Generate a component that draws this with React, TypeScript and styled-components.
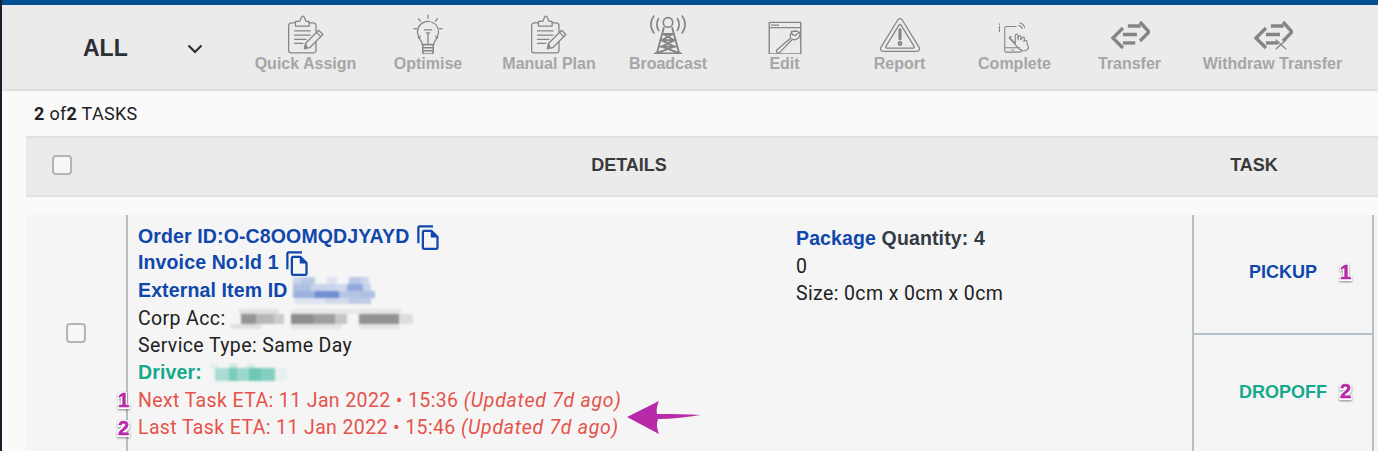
import { FC, ReactNode } from "react";
import styled, { createGlobalStyle } from "styled-components";

const GlobalStyle = createGlobalStyle`
  html, body { margin: 0; padding: 0; background: #fafafa; }
  body { font-family: Roboto, "Liberation Sans", sans-serif; color: #212121; }
`;

const boldFont = `"Liberation Sans", Arial, sans-serif`;

const Page = styled.div`
  height: 451px;
  overflow: hidden;
  display: flex;
  flex-direction: column;
  border-left: 2px solid #16202c;
  background: #fafafa;
`;
const TopBar = styled.div`
  flex: none;
  height: 5px;
  background: #044e92;
  box-shadow: 0 1px 2px rgba(0, 0, 0, 0.25);
`;
const Toolbar = styled.div`
  flex: none;
  height: 84px;
  display: flex;
  background: #ebebeb;
  border-bottom: 2px solid #e0e0e0;
`;
const Selector = styled.div`
  width: 242px;
  display: flex;
  align-items: center;
  padding: 3px 0 0 81px;
  box-sizing: border-box;
  font-family: ${boldFont};
  font-size: 23px;
  font-weight: 700;
  color: #2b3036;
`;
const Chevron = styled.svg`
  margin-left: 59px;
`;
const Actions = styled.div`
  display: grid;
  grid-template-columns: 123px 122px 120px 118px 115px 115px 115px 115px 171px;
`;
const Action = styled.div`
  display: flex;
  flex-direction: column;
  align-items: center;
  padding-top: 9px;
  font-family: ${boldFont};
  font-size: 16px;
  line-height: 19px;
  font-weight: 700;
  color: #a6a6a6;
  white-space: nowrap;
`;
const ActionIcon = styled.svg`
  display: block;
  height: 40px;
  width: 40px;
  fill: none;
  stroke: #858585;
  stroke-width: 1.2;
  stroke-linejoin: round;
  stroke-linecap: round;
`;
const Count = styled.div`
  flex: none;
  height: 45px;
  padding: 13px 0 0 32px;
  box-sizing: border-box;
  font-size: 18px;
  line-height: 19px;
  letter-spacing: 0.3px;
  b { font-weight: 700; }
`;
const Content = styled.div`
  padding-left: 24px;
  display: flex;
  flex-direction: column;
`;
const HeaderRow = styled.div`
  height: 57px;
  display: grid;
  grid-template-columns: 72px 1062px 188px 1fr;
  align-items: center;
  background: #ebebeb;
  border-top: 2px solid #e0e0e0;
  border-bottom: 2px solid #e0e0e0;
  margin-bottom: 18px;
`;
const HeaderCell = styled.div`
  text-align: center;
  font-family: ${boldFont};
  font-size: 18px;
  font-weight: 700;
  color: #3a3a3a;
  margin-bottom: 3px;
`;
const Checkbox = styled.span`
  display: block;
  width: 20px;
  height: 20px;
  box-sizing: border-box;
  border: 2px solid #b4b4b4;
  border-radius: 4px;
  background: #f7f7f7;
`;
const HeaderCheck = styled.div`
  padding: 0 0 3px 26px;
`;
const TaskRow = styled.div`
  height: 260px;
  display: grid;
  grid-template-columns: 100px 1066px 182px 1fr;
  background: #f5f5f5;
  border-radius: 4px 0 0 0;
`;
const CheckCell = styled.div`
  display: flex;
  justify-content: center;
  padding-top: 108px;
`;
const DetailsCell = styled.div`
  display: grid;
  grid-template-columns: 658px 1fr;
  padding: 8px 0 0 10px;
  border-left: 2px solid #b4c0c6;
`;
const Stack = styled.div<{ $top?: number }>`
  padding-top: ${(p) => p.$top ?? 0}px;
`;
const Line = styled.div<{ $tone?: "blue" | "green" | "red"; $bold?: boolean; $h?: number }>`
  position: relative;
  display: flex;
  align-items: center;
  height: ${(p) => p.$h ?? 27.5}px;
  font-family: ${(p) => (p.$bold ? boldFont : "Roboto, sans-serif")};
  font-size: 19.5px;
  letter-spacing: ${(p) => (p.$bold ? 0.13 : 0.38)}px;
  font-weight: ${(p) => (p.$bold ? 700 : 400)};
  white-space: pre;
  color: ${(p) =>
    p.$tone === "blue" ? "#0f47ad" : p.$tone === "green" ? "#16a98c" : p.$tone === "red" ? "#e5534b" : "#212121"};
`;
const Muted = styled.em`
  font-style: italic;
  letter-spacing: 0.72px;
`;
const Dark = styled.span`
  color: #333b44;
`;
const Blue = styled.span`
  color: #0f47ad;
`;
const CopyIcon = styled.svg`
  flex: none;
  width: 27px;
  height: 27px;
  margin-top: 2px;
  fill: #0f47ad;
`;
const Mosaic = styled.svg`
  flex: none;
  filter: blur(1px);
`;
const TaskColumn = styled.div`
  display: grid;
  grid-template-rows: 118px 1fr;
  border-left: 2px solid #b4c0c6;
  border-right: 2px solid #b4c0c6;
`;
const TaskCell = styled.div<{ $tone: "blue" | "green"; $divider?: boolean }>`
  position: relative;
  display: flex;
  justify-content: center;
  align-items: flex-start;
  padding-top: 47px;
  box-sizing: border-box;
  font-family: ${boldFont};
  font-size: 18px;
  line-height: 21px;
  font-weight: 700;
  color: ${(p) => (p.$tone === "blue" ? "#0f47ad" : "#16a98c")};
  border-top: ${(p) => (p.$divider ? "2px solid #b4c0c6" : "none")};
`;
const Marker = styled.span<{ $left: number; $top: number }>`
  position: absolute;
  left: ${(p) => p.$left}px;
  top: ${(p) => p.$top}px;
  font-family: ${boldFont};
  font-size: 20px;
  line-height: 20px;
  font-weight: 700;
  letter-spacing: 0;
  color: #b72ba9;
  -webkit-text-stroke: 0.5px #b72ba9;
  text-shadow: -1.5px -1.5px 0 #fff, 1.5px -1.5px 0 #fff, -1.5px 1.5px 0 #fff, 1.5px 1.5px 0 #fff;
  filter: drop-shadow(0.5px 1px 1px rgba(0, 0, 0, 0.45));
`;
const Arrow = styled.svg`
  position: absolute;
  left: 623px;
  top: 308px;
`;
const Shell = styled.div`
  position: relative;
`;

const swapArrows = (
  <g strokeWidth="3.200" strokeLinecap="butt" strokeLinejoin="miter">
    <path d="M28.500 7.600L37 17l-8.500 8.600" />
    <path d="M17 11.400h12M12.300 19.500h13.300" />
    <path d="M12.300 13.300L2.800 22.800l9.500 9.500" />
    <path d="M12.300 27.500H24" />
  </g>
);

const icons: Record<string, ReactNode> = {
  clipboard: (
    <>
      <path d="M9 8.500H5A2.500 2.500 0 0 0 2.500 11v23.500A2.500 2.500 0 0 0 5 37h21a2.500 2.500 0 0 0 2.500-2.500V27M28.500 17v-6A2.500 2.500 0 0 0 26 8.500h-4" />
      <path d="M9 11.500V7h4l2-4.500a1.500 1.500 0 0 1 2 0L19 7h3v4.500Z" />
      <path d="M8 16h15M8 20h15M8 24h11M8 28h8" />
      <path d="M17.500 33l1-5L31 15.500l4 4L22.500 32Z" />
      <path d="M29 17.500l4 4M17.500 33l2.500-1.500-1-2.500Z" />
    </>
  ),
  bulb: (
    <>
      <path d="M19 1v3M10 4.500l1.800 2.200M28 4.500l-1.800 2.200M5.500 14h2.500M30 14h2.500M10 23l1.800-2M28 23l-1.800-2" />
      <path d="M13.500 29c0-4-4.500-6-4.500-12a10 10 0 0 1 20 0c0 6-4.500 8-4.500 12Z" strokeDasharray="30 2" />
      <path d="M15.500 15h7M17.500 18h3M19 18v10" />
      <path d="M14 29h10v7a2 2 0 0 1-2 2h-6a2 2 0 0 1-2-2ZM14 32h10M14 35h10" strokeWidth="1.4" />
    </>
  ),
  tower: (
    <>
      <g strokeWidth="1.600">
        <path d="M5.500 2c-3.500 5-3.500 11 0 16M32.500 2c3.500 5 3.500 11 0 16M10 4.500c-2 3.500-2 7.500 0 11M28 4.500c2 3.500 2 7.500 0 11" />
        <circle cx="19" cy="8" r="4.500" />
      </g>
      <path d="M15 13L8.500 37M23 13l6.500 24M6.500 37.500h25M14.500 19h9M13 25h12M11 31h16M14.500 19L25 25 13 31l16 6M23.500 19L13 25l12 6L9 37" strokeWidth="1.800" />
    </>
  ),
  edit: (
    <>
      <path d="M4 8h30v30H4ZM4 13h30" strokeWidth="1.300" />
      <path d="M6 10.500h7" />
      <path d="M31 16.500c-3-1.500-7 .5-7 4 0 1 .3 1.800.5 2.300L11.500 34c-2 2 1 4 3 2l11.500-12c2 .8 4 .5 5.500-1s2.200-4 1-6l-3.500 3.500-3-1-1-3Z" />
    </>
  ),
  report: (
    <>
      <path d="M17 5.500a2.500 2.500 0 0 1 4 0l16 26a2.500 2.500 0 0 1-2 4H3a2.500 2.500 0 0 1-2-4Z" />
      <path d="M18 10.500a1.200 1.200 0 0 1 2 0l12.500 20.500a1 1 0 0 1-1 1.500h-25a1 1 0 0 1-1-1.500Z" />
      <path d="M19 15v8.500" strokeWidth="3" />
      <circle cx="19" cy="28" r="1.400" strokeWidth="1.800" />
    </>
  ),
  complete: (
    <g transform="translate(2.500 6) scale(0.84)">
      <path d="M21 7H10a2 2 0 0 0-2 2v25a2 2 0 0 0 2 2h15a2 2 0 0 0 2-2v-1" />
      <path d="M8 31h17M16 33.500h2" />
      <path d="M2 4v1M2 7v6" />
      <path d="M25 3c3 .5 5 2.500 5.500 5.500M24 6c2 .3 3.300 1.600 3.600 3.500" />
      <path d="M13 19l7 7v-9a1.500 1.500 0 0 1 3 0v5l1-4a1.400 1.400 0 0 1 2.500.5L26 22l2-2.500a1.300 1.300 0 0 1 2.300 1L29.500 24l1.500-1a1.200 1.200 0 0 1 2 1c.5 3 1 5 2 7-1.500 3-5 4-8 3-3-1-5-4-6.500-6l-7-7.500a1.500 1.500 0 0 1 2-2Z" />
    </g>
  ),
  transfer: swapArrows,
  withdraw: (
    <>
      {swapArrows}
      <path d="M21.800 24.700l9.500 8.500M31.300 24.700l-9.500 8.500" />
    </>
  ),
};

const actions = [
  ["Quick Assign", "clipboard"],
  ["Optimise", "bulb"],
  ["Manual Plan", "clipboard"],
  ["Broadcast", "tower"],
  ["Edit", "edit"],
  ["Report", "report"],
  ["Complete", "complete"],
  ["Transfer", "transfer"],
  ["Withdraw Transfer", "withdraw"],
];

const ToolAction: FC<{ label: string; icon: string }> = ({ label, icon }) => (
  <Action>
    <ActionIcon viewBox="0 0 38 38">{icons[icon]}</ActionIcon>
    {label}
  </Action>
);

const Copy: FC = () => (
  <CopyIcon viewBox="0 0 24 24">
    <path d="M16 1H4c-1.100 0-2 .9-2 2v14h2V3h12V1zm-1 4H8c-1.100 0-1.990.9-1.990 2L6 21c0 1.100.89 2 1.990 2H19c1.100 0 2-.9 2-2V11l-6-6zM8 21V7h6v5h5v9H8z" />
  </CopyIcon>
);

// pixelated redaction blocks: x, y, w, h, opacity
const Redaction: FC<{ w: number; h: number; color: string; cells: number[][] }> = ({ w, h, color, cells }) => (
  <Mosaic width={w} height={h} viewBox={`0 0 ${w} ${h}`}>
    {cells.map(([x, y, cw, ch, o], i) => (
      <rect key={i} x={x} y={y} width={cw} height={ch} fill={color} opacity={o} />
    ))}
  </Mosaic>
);

const itemCells = [
  [0, 0, 8, 7, 0.22], [8, 0, 14, 7, 0.3], [34, 0, 10, 7, 0.12], [56, 0, 12, 7, 0.3], [68, 0, 8, 7, 0.2],
  [0, 7, 18, 7, 0.35], [18, 7, 24, 7, 0.22], [42, 7, 12, 7, 0.18], [54, 7, 16, 7, 0.5], [70, 7, 8, 7, 0.22],
  [0, 14, 22, 7, 0.45], [22, 14, 24, 7, 0.68], [46, 14, 20, 7, 0.32], [66, 14, 16, 7, 0.35],
  [2, 21, 30, 6, 0.12], [32, 21, 24, 6, 0.18], [56, 21, 22, 6, 0.28],
];
const corpCells = [
  [8, 0, 40, 5, 0.12], [60, 0, 70, 5, 0.08], [130, 0, 40, 5, 0.1],
  [10, 5, 15, 10, 0.6], [25, 5, 18, 10, 0.38], [43, 5, 10, 10, 0.25], [60, 5, 22, 10, 0.65], [82, 5, 22, 10, 0.55],
  [104, 5, 12, 10, 0.3], [128, 5, 40, 10, 0.62], [168, 5, 14, 10, 0.15],
  [0, 15, 30, 5, 0.12], [60, 15, 50, 5, 0.1], [128, 15, 40, 5, 0.1],
];
const driverCells = [
  [3, 0, 8, 4, 0.1], [22, 0, 8, 4, 0.2], [40, 0, 8, 4, 0.14],
  [8, 4, 14, 13, 0.32], [22, 4, 8, 13, 0.55], [30, 4, 12, 13, 0.4], [42, 4, 12, 13, 0.6], [54, 4, 14, 13, 0.5],
  [68, 4, 12, 13, 0.06],
];

export default function App() {
  return (
    <Page>
      <GlobalStyle />
      <TopBar />
      <Toolbar>
        <Selector>
          ALL
          <Chevron width="16" height="10" viewBox="0 0 16 10" fill="none" stroke="#2b3036" strokeWidth="2.200">
            <path d="M1.500 1.500L8 8l6.500-6.500" />
          </Chevron>
        </Selector>
        <Actions>
          {actions.map(([label, icon]) => (
            <ToolAction key={label} label={label} icon={icon} />
          ))}
        </Actions>
      </Toolbar>
      <Shell>
        <Count>
          <b>2</b> of<b>2</b> TASKS
        </Count>
        <Content>
          <HeaderRow>
            <HeaderCheck>
              <Checkbox />
            </HeaderCheck>
            <HeaderCell>DETAILS</HeaderCell>
            <HeaderCell>TASK</HeaderCell>
          </HeaderRow>
          <TaskRow>
            <CheckCell>
              <Checkbox />
            </CheckCell>
            <DetailsCell>
              <Stack>
                <Line $tone="blue" $bold $h={26}>
                  Order ID:O-C8OOMQDJYAYD <Copy />
                </Line>
                <Line $tone="blue" $bold $h={26}>
                  Invoice No:Id 1 <Copy />
                </Line>
                <Line $tone="blue" $bold $h={30}>
                  External Item ID <Redaction w={84} h={27} color="#2f5fc4" cells={itemCells} />
                </Line>
                <Line $h={27}>
                  Corp Acc: <Redaction w={182} h={20} color="#555" cells={corpCells} />
                </Line>
                <Line $h={27}>Service Type: Same Day</Line>
                <Line $tone="green" $bold>
                  Driver: <Redaction w={80} h={18} color="#16a98c" cells={driverCells} />
                </Line>
                <Line $tone="red">
                  <Marker $left={-20} $top={3}>1</Marker>
                  Next Task ETA: 11 Jan 2022 • 15:36 <Muted>(Updated 7d ago)</Muted>
                </Line>
                <Line $tone="red">
                  <Marker $left={-20} $top={4}>2</Marker>
                  Last Task ETA: 11 Jan 2022 • 15:46 <Muted>(Updated 7d ago)</Muted>
                </Line>
              </Stack>
              <Stack $top={2}>
                <Line $bold>
                  <Dark>
                    <Blue>Package</Blue> Quantity: 4
                  </Dark>
                </Line>
                <Line>0</Line>
                <Line>Size: 0cm x 0cm x 0cm</Line>
              </Stack>
            </DetailsCell>
            <TaskColumn>
              <TaskCell $tone="blue">
                PICKUP
                <Marker $left={146} $top={47}>1</Marker>
              </TaskCell>
              <TaskCell $tone="green" $divider>
                DROPOFF
                <Marker $left={146} $top={46}>2</Marker>
              </TaskCell>
            </TaskColumn>
          </TaskRow>
        </Content>
        <Arrow width="78" height="36" viewBox="0 0 78 36">
          <path d="M2 18L34 2c-2 5-3 9-2 13 15 0 30 0 44 1-14 2-29 4-43 4-2 5-1 10 1 15Z" fill="#b72ba9" />
        </Arrow>
      </Shell>
    </Page>
  );
}
